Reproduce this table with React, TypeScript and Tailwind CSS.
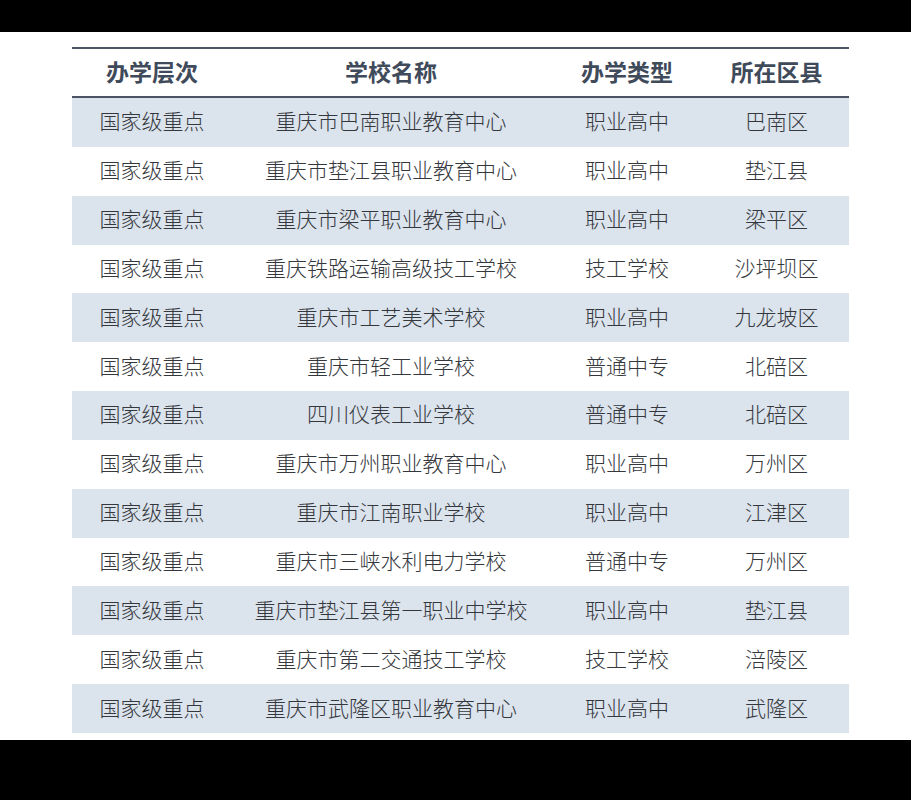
import React from 'react';

const rows: [string, string, string, string][] = [
  ['国家级重点', '重庆市巴南职业教育中心', '职业高中', '巴南区'],
  ['国家级重点', '重庆市垫江县职业教育中心', '职业高中', '垫江县'],
  ['国家级重点', '重庆市梁平职业教育中心', '职业高中', '梁平区'],
  ['国家级重点', '重庆铁路运输高级技工学校', '技工学校', '沙坪坝区'],
  ['国家级重点', '重庆市工艺美术学校', '职业高中', '九龙坡区'],
  ['国家级重点', '重庆市轻工业学校', '普通中专', '北碚区'],
  ['国家级重点', '四川仪表工业学校', '普通中专', '北碚区'],
  ['国家级重点', '重庆市万州职业教育中心', '职业高中', '万州区'],
  ['国家级重点', '重庆市江南职业学校', '职业高中', '江津区'],
  ['国家级重点', '重庆市三峡水利电力学校', '普通中专', '万州区'],
  ['国家级重点', '重庆市垫江县第一职业中学校', '职业高中', '垫江县'],
  ['国家级重点', '重庆市第二交通技工学校', '技工学校', '涪陵区'],
  ['国家级重点', '重庆市武隆区职业教育中心', '职业高中', '武隆区'],
];

const headers = ['办学层次', '学校名称', '办学类型', '所在区县'];

const cols = 'grid grid-cols-[160px_318px_154px_145px]';

const App = () => {
  return (
    <div className="w-[911px] h-[800px] flex flex-col bg-black font-['Noto_Sans_CJK_SC',sans-serif] overflow-hidden">
      <div className="h-[32px] bg-black" />
      <main className="h-[708px] bg-white px-[72px] pt-[15px]">
        <div className="w-[777px] border-t-2 border-[#4b5563]">
          {/* Header */}
          <div className={`${cols} h-[49px] items-center pb-[2px] border-b-2 border-[#4b5563] text-[23px] leading-none font-bold text-[#3f4a5a]`}>
            {headers.map((h) => (
              <div key={h} className="text-center">{h}</div>
            ))}
          </div>
          {/* Body */}
          {rows.map((r, i) => (
            <div
              key={i}
              className={`${cols} h-[48.85px] items-center pb-[3px] text-[21px] leading-none font-light text-[#34373c] ${i % 2 === 0 ? 'bg-[#dbe3ec]' : 'bg-white'}`}
            >
              {r.map((c, j) => (
                <div key={j} className="text-center whitespace-nowrap">{c}</div>
              ))}
            </div>
          ))}
        </div>
      </main>
      <div className="flex-1 bg-black" />
    </div>
  );
};

export default App;
